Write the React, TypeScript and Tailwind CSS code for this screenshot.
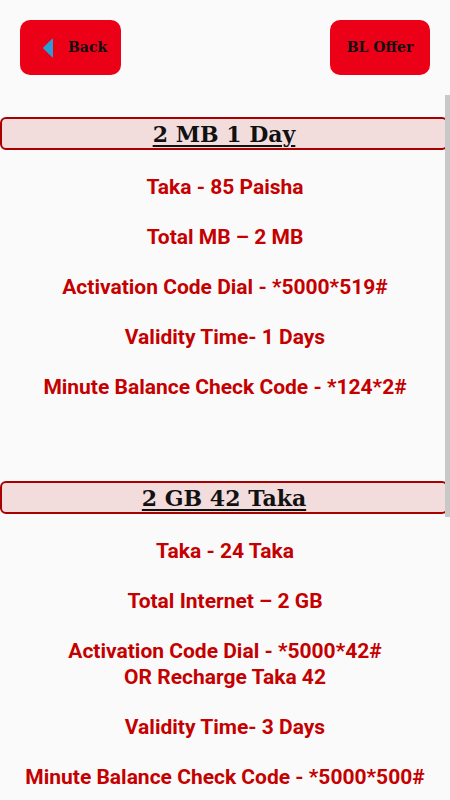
const serif = "font-['DejaVu_Serif','Liberation_Serif',serif]";

function Row({ children }: { children: React.ReactNode }) {
  return (
    <p className="mt-6 text-center text-[21px] leading-[26px] font-bold text-[#c40000]">
      {children}
    </p>
  );
}

function Title({ text }: { text: string }) {
  return (
    <div className="h-[33px] w-[448px] rounded-[6px] border-2 border-[#a80000] bg-[#f2dcdc] flex items-center justify-center">
      <h2 className={`${serif} text-[22px] leading-none font-bold text-[#111] underline underline-offset-[3px] decoration-2`}>
        {text}
      </h2>
    </div>
  );
}

export default function App() {
  return (
    <div className="w-[450px] h-[800px] overflow-hidden bg-[#fafafa] font-['Roboto',sans-serif]">
      <div className="flex justify-between px-5 pt-5">
        <button className="w-[101px] h-[55px] rounded-[10px] bg-[#ec0018] flex items-center pl-[22px] gap-[14px]">
          <svg width="12" height="20" viewBox="0 0 12 20">
            <path d="M11 1 L11 19 Q11 20 10 19 L1.5 10.8 Q0.7 10 1.5 9.2 L10 1 Q11 0 11 1 Z" fill="#2a9ed4" />
          </svg>
          <span className={`${serif} text-[14px] font-bold text-[#111]`}>Back</span>
        </button>
        <button className="w-[100px] h-[55px] rounded-[10px] bg-[#ec0018] flex items-center justify-center">
          <span className={`${serif} text-[14px] font-bold text-[#111]`}>BL Offer</span>
        </button>
      </div>

      <div className="relative mt-5 pt-[22px]">
        <div className="absolute right-0 top-0 w-[5px] h-[422px] bg-[#c8c8c8]" />
        <section>
          <Title text="2 MB 1 Day" />
          <Row>Taka - 85 Paisha</Row>
          <Row>Total MB – 2 MB</Row>
          <Row>Activation Code Dial - *5000*519#</Row>
          <Row>Validity Time- 1 Days</Row>
          <Row>Minute Balance Check Code - *124*2#</Row>
        </section>
        <section className="mt-[81px]">
          <Title text="2 GB 42 Taka" />
          <Row>Taka - 24 Taka</Row>
          <Row>Total Internet – 2 GB</Row>
          <Row>
            Activation Code Dial - *5000*42#
            <br />
            OR Recharge Taka 42
          </Row>
          <Row>Validity Time- 3 Days</Row>
          <Row>Minute Balance Check Code - *5000*500#</Row>
        </section>
      </div>
    </div>
  );
}
